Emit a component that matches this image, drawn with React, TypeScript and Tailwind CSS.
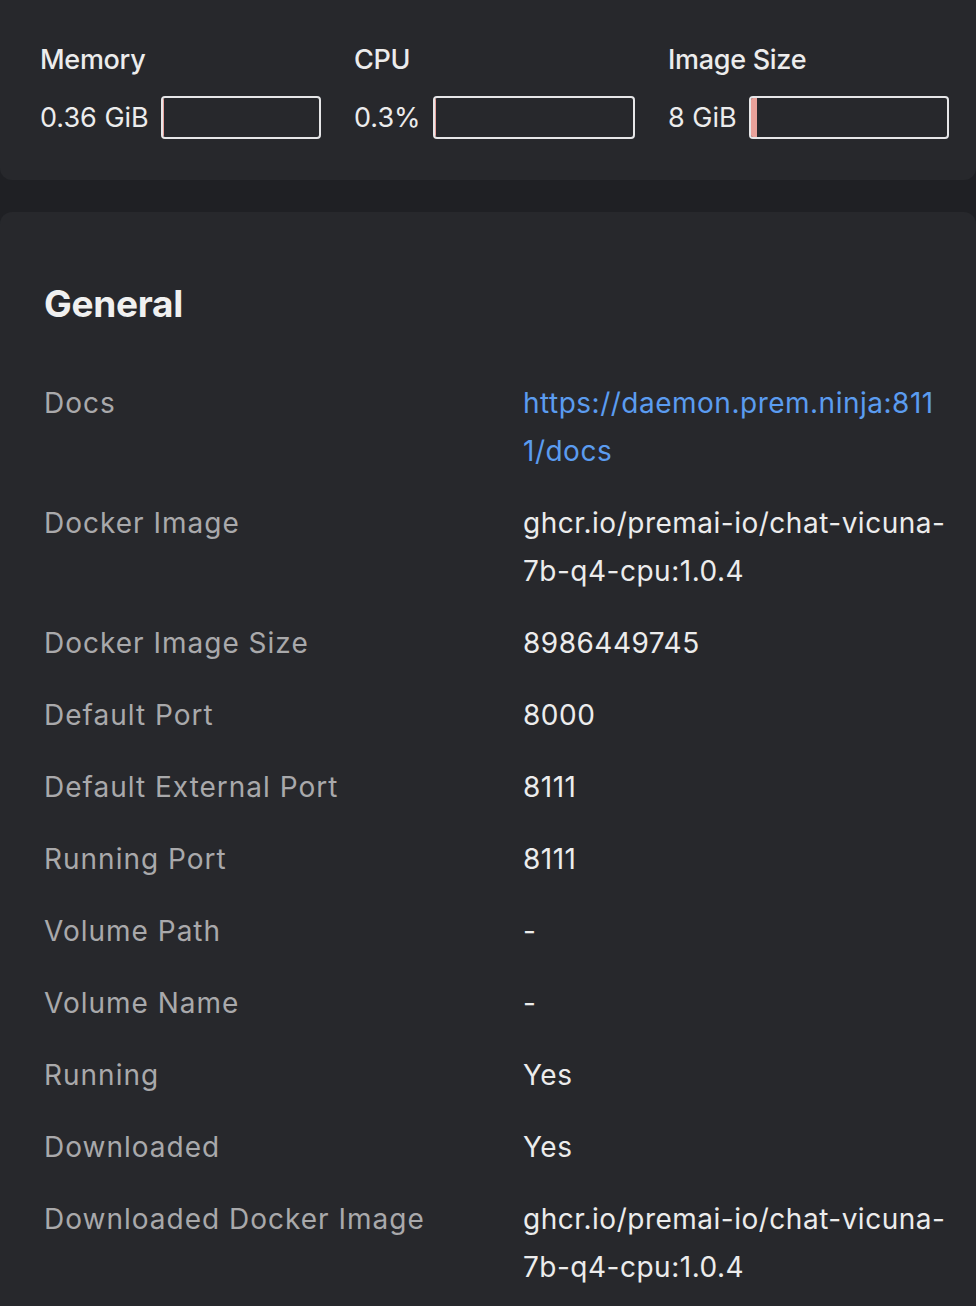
import React from "react";

const stats = [
  { label: "Memory", value: "0.36 GiB", pct: 0.5 },
  { label: "CPU", value: "0.3%", pct: 0.3 },
  { label: "Image Size", value: "8 GiB", pct: 3 },
];

const rows: { k: string; v: string; link?: boolean }[] = [
  { k: "Docs", v: "https://daemon.prem.ninja:8111/docs", link: true },
  { k: "Docker Image", v: "ghcr.io/premai-io/chat-vicuna-7b-q4-cpu:1.0.4" },
  { k: "Docker Image Size", v: "8986449745" },
  { k: "Default Port", v: "8000" },
  { k: "Default External Port", v: "8111" },
  { k: "Running Port", v: "8111" },
  { k: "Volume Path", v: "-" },
  { k: "Volume Name", v: "-" },
  { k: "Running", v: "Yes" },
  { k: "Downloaded", v: "Yes" },
  { k: "Downloaded Docker Image", v: "ghcr.io/premai-io/chat-vicuna-7b-q4-cpu:1.0.4" },
];

export default function App() {
  return (
    <div className="min-h-[1306px] w-[976px] overflow-hidden bg-[#1f2024]">
      <div
        className="h-[180px] rounded-b-[12px] bg-[#27282c] pl-[40px] pr-[27px] pt-[42px]"
        style={{ fontFamily: "Inter, 'Liberation Sans', sans-serif" }}
      >
        <div className="grid grid-cols-3 gap-x-[33px]">
          {stats.map((s) => (
            <div key={s.label} className="flex flex-col">
              <div className="text-[27px] font-medium leading-[36px] tracking-[-0.3px] text-[#ececec]">{s.label}</div>
              <div className="mt-[18px] flex items-center gap-[12px]">
                <span className="whitespace-nowrap text-[27px] leading-[36px] text-[#ececec]">{s.value}</span>
                <div className="relative h-[43px] flex-1 overflow-hidden rounded-[4px] border-2 border-[#e6e6e8]">
                  <div
                    className="absolute inset-y-0 left-0 bg-[#e8a19a]"
                    style={{ width: `${s.pct}%` }}
                  />
                </div>
              </div>
            </div>
          ))}
        </div>
      </div>
      <div
        className="mt-[32px] rounded-t-[12px] bg-[#27282c] pl-[44px] pr-[30px] pt-[64px] pb-[40px]"
        style={{ fontFamily: "Inter, 'Open Sans', sans-serif" }}
      >
        <h2 className="text-[37px] font-bold leading-[56px] tracking-[-0.3px] text-[#f0f0f0]">General</h2>
        <div className="mt-[47px] flex flex-col gap-[24px]">
          {rows.map((r) => (
            <div key={r.k} className="flex text-[28px] leading-[48px]">
              <div className="w-[479px] shrink-0 tracking-[1px] text-[#a9a9ab]">{r.k}</div>
              <div
                className={
                  "w-[423px] tracking-[0.5px] " +
                  (r.link ? "break-all text-[#5b9cf0]" : "break-words text-[#ececec]")
                }
              >
                {r.v}
              </div>
            </div>
          ))}
        </div>
      </div>
    </div>
  );
}
